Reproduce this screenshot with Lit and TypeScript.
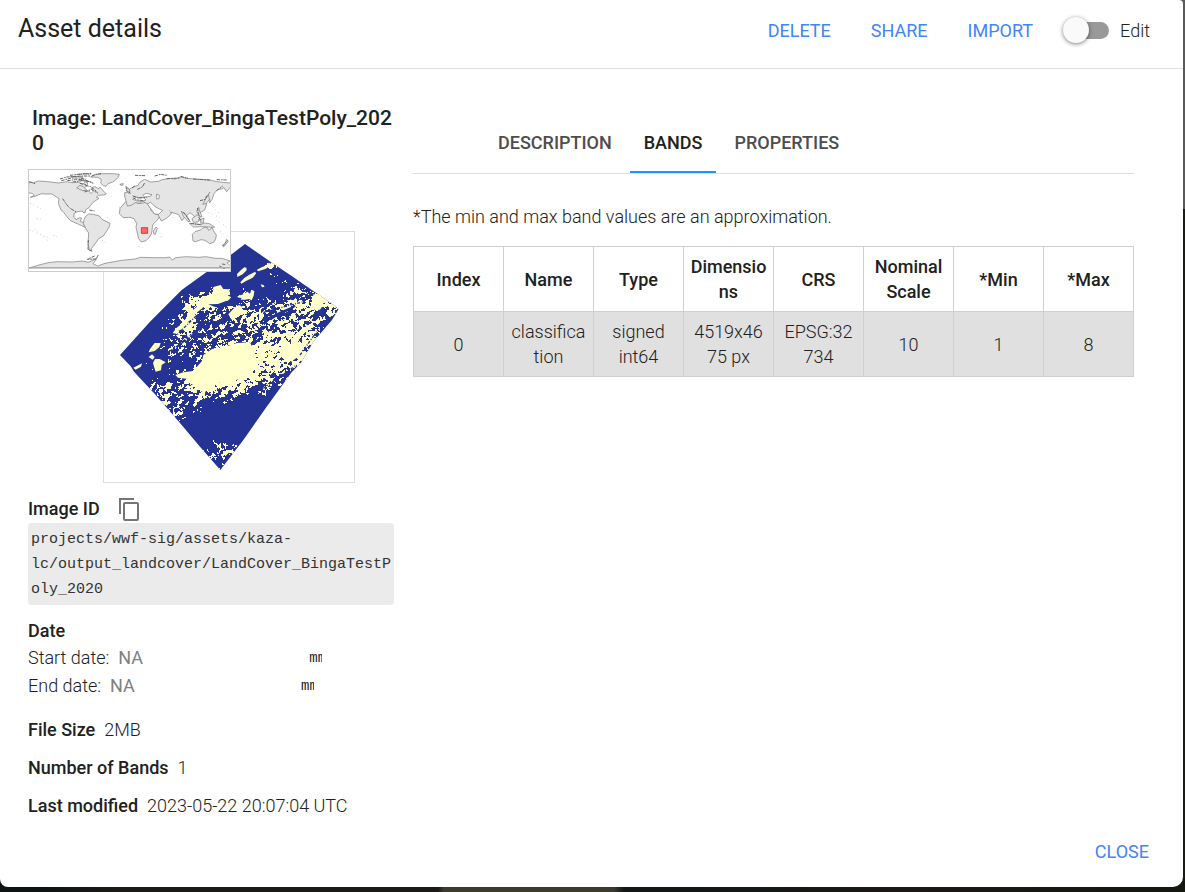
import { LitElement, html, css, svg } from "lit";
import { customElement, state } from "lit/decorators.js";

// Share of class 2 (cream) pixels, 0-9, at nodes spaced 12 pixels apart.
const DENSITY = [
  "0000000000000000000000",
  "0000000000000000000000",
  "0000000000000000000000",
  "0000000000000250000000",
  "0000000000000012200000",
  "0000000027503002436700",
  "0000000588335445568700",
  "0000001823366635632600",
  "0000014633334455566000",
  "0000015544545556665000",
  "0000034434788877870000",
  "0001231048999777750000",
  "0000013588998654000000",
  "0000455688664431000000",
  "0000554332221000000000",
  "0000034310000000000000",
  "0000004100000000000000",
  "0000000011000000000000",
  "0000000012331000000000",
  "0000000004430000000000",
  "0000000000000000000000",
  "0000000000000000000000",
];

const hash = (x: number, y: number, seed: number) => {
  let n = (x * 374761393 + y * 668265263 + seed * 1442695041) | 0;
  n = Math.imul(n ^ (n >>> 13), 1274126177);
  n = Math.imul(n ^ (n >>> 16), 2246822519);
  return ((n ^ (n >>> 15)) >>> 0) / 4294967296;
};

const smooth = (x: number, y: number, seed: number) => {
  const xi = Math.floor(x);
  const yi = Math.floor(y);
  const fx = x - xi;
  const fy = y - yi;
  const top = hash(xi, yi, seed) * (1 - fx) + hash(xi + 1, yi, seed) * fx;
  const low = hash(xi, yi + 1, seed) * (1 - fx) + hash(xi + 1, yi + 1, seed) * fx;
  return top * (1 - fy) + low * fy;
};

const density = (x: number, y: number) => {
  const gx = x / 12;
  const gy = y / 12;
  const i = Math.floor(gx);
  const j = Math.floor(gy);
  const at = (a: number, b: number) => Number(DENSITY[b]?.[a] ?? 0);
  const fx = gx - i;
  const fy = gy - j;
  return (
    ((at(i, j) * (1 - fx) + at(i + 1, j) * fx) * (1 - fy) +
      (at(i, j + 1) * (1 - fx) + at(i + 1, j + 1) * fx) * fy) / 9
  );
};

const buildSpeckle = () => {
  let d = "";
  for (let y = 0; y < 252; y++) {
    let start = -1;
    for (let x = 0; x <= 252; x++) {
      const u = x * 0.85 - y * 0.52;
      const v = x * 0.52 + y * 0.85;
      const noise =
        smooth(u / 5, v / 2.2, 3) * 0.42 + smooth(x / 1.8, y / 1.8, 9) * 0.42 + hash(x, y, 5) * 0.16;
      const level = 0.54 + (noise - 0.5) * 1.6;
      const on = x < 252 && density(x, y) > Math.max(level, 0.1);
      if (on && start < 0) start = x;
      if (!on && start >= 0) {
        d += `M${9 + start * 3} ${18 + y * 3}h${(x - start) * 3}v3h${(start - x) * 3}z`;
        start = -1;
      }
    }
  }
  return d;
};

const SPECKLE = buildSpeckle();

const sceneSvg = svg`
  <defs>
    <clipPath id="scene">
      <path d="M435 57L520 116L574 152L640 198L690 232L716 252L696 285L640 350L604 412L575 442L500 545L430 645L361 735L300 665L238 592L165 508L102 440L92 424L60 390L150 290L245 195L300 155L392 90Z"/>
    </clipPath>
  </defs>
  <g clip-path="url(#scene)">
    <path fill="#253494" d="M0 0h800v800H0z"/>
    <path fill="#ffffcc" d="M340 186l22-6l8 12l18 1l1 10l-14 5l18 8l-3 8l-20 7l-16 6l-24 0l-20 10l-22 18l-10 16l-12 8l-14 20l-16 8l-10 9l-8-2l12-16l20-15l12-16l8-14l20-18l12-20l18-8l20-12zM310 390l26-18l38-6l36-12l40-2l12 26l4 40l-20 22l-28 22l-26 8l-30 4l-20-4l-2 10l-20 12l-6 14l-14-10l-26-20l-10-14l-30-4l-8-8l24-8l30-4l12-14l14-16zM560 370l20-18l24 4l-2 22l-12 20l-16 12l-12-10zM640 208l18 0l12 14l0 18l-10 14l-16 2l-6-18zM385 268l18-20l14-8l8 4l-6 18l-10 14l-14 8z"/>
    <path fill="#ffffcc" shape-rendering="crispEdges" d="${SPECKLE}"/>
    <path fill="#ffffcc" d="M411 147l12-12l10-8l6 1l1 8l-12 12l-16 8zM421 172l12-13l15-10l18-9l2 6l-10 12l-20 10l-14 8zM471 134l14-7l12-5l10-9l9 5l8 6l-16 0l-10 7l-24 8zM482 178l8 2l4 5l-8 2zM412 214l18-6l12-8l8 6l4-12l9 4l-2 14l-6 14l-8-4l-12 2l-18 0zM150 372l14-18l18 0l-4 12l-14 12l-18 4zM146 396l10-8l8 8l-6 8zM165 402l14 0l18 10l-12 8l-2 16l-16 4l-4-12l-4-14zM100 428l16-8l10-5l-3 10l-16 9z"/>
    <path fill="#253494" d="M325 238l34-1l24-10l14-12l28 4l-6 12l-26 10l-30 8l-20-4zM485 282l30-10l24-12l34-14l16-3l-16 12l-34 14l-22 14l-26 4z"/>
    <path fill="none" stroke="#253494" stroke-width="4" stroke-dasharray="9 5 3 4" d="M222 338L310 252M240 352L340 286M210 378L300 318M468 250L600 214M490 262L610 230M520 468L590 420M490 490L552 446M620 300L680 250M600 390L650 320"/>
  </g>
`;

const worldSvg = svg`
  <g fill="#e5e5e5" stroke="#777" stroke-width="2" stroke-linejoin="round">
    <path d="M27 66l14 3l12-6l30 2l32 4l24-4l18 3l18-1l14 6l6-8l8 3l-2 10l-14 8l2 6l18 1l6 8l6-6l-4-12l10-3l10 6l6-4l10 12l8 8l-8 3l-16 1l-6 5l8 4l-18 12l-8 10l-4 6l-10 6l-2 10l-6-2l-2-4l-14 2l-10 4l-2 12l8 8l10-6l6 1l-4 10l10 4l2 8l8 4l-6 2l-12-6l-18-8l-14-6l-12-14l-10-14l-6-4l-8-20l2-14l-12-8l-10-6l-20 0l-10-1l-20 8l-14 3l12-6l-6-6l-14-1z"/>
    <path d="M212 51l14-7l22-3l30 0l20 2l-4 9l-8 9l-8 5l-14 5l-6 8l-8-2l-8-8l2-10l-10-7z"/>
    <path d="M196 170l10-8l14 1l18 5l8 10l24 12l-2 10l-10 16l-8 12l-14 8l-8 12l-8 10l-6 8l2 8l-8-3l-4-20l2-32l-8-12l-8-16l2-12z"/>
    <path d="M318 124l18-2l10 5l14 4l18-4l8 4l8 22l12 10l16-1l-8 16l-16 16l-2 18l-2 10l-8 12l-8 8l-14 4l-8-10l-8-34l2-12l-8-14l-12-4l-20 1l-12-12l2-16z"/>
    <path d="M314 108l0-10l16-3l-2-8l12-6l14-5l6-10l14-8l18 8l24-2l10-5l24-4l16 2l14-6l20 4l36 3l34 2l20 5l40 4l20 0l-12 8l-10 8l-8 10l-8-12l-8 4l-12 2l-10 12l-6 18l-8 10l2-10l-14 1l4 12l-6 18l-14 8l-4 8l4 14l-10 4l-4-10l-6-8l-10-8l-18 16l-6 8l-10-18l-12-4l-12-4l2 6l-16 14l-14 7l-16-30l-4-6l-4-8l-14-1l-2-6l-16-8l-10 6l-12-2l-12 8l-12 2z"/>
    <path d="M517 223l8-8l16-5l10-7l12 0l2 8l8-4l2-8l6 14l8 12l-2 12l-6 10l-12 4l-14-10l-12-2l-16 6l-8-2z"/>
    <path d="M400 213l8-12l4 4l-6 18l-5-2zM484 154l14 10l12 20l-6 1l-14-16zM508 190l34 4l12-5l14 2l16 10l-8 1l-22-2l-34 1zM516 176l16-12l8 8l-6 14l-14 1zM542 178l10-4l-2 14l-8 2zM530 154l6-12l4 14l6 14l-6 0zM566 105l2 14l-10 12l-10 2l6-10l4-14zM620 238l5 6l-14 17l-4-3l8-8zM319 92l4-10l6 10l-2 9zM301 72l9-1l-2 5l-8-1zM170 84l18 8l12-2l-10-10l-10-4z"/>
    <path fill="#fff" d="M338 118l10-7l8 4l14-2l8 7l-12 4l-14-1zM368 106l10-6l18 4l-6 5l-16 2zM410 102l8 4l-1 10l-7 1zM382 132l22 30l12 1l12-12l-10-4l-14-8l-12-12z"/>
    <path d="M27 324l30-9l28-7l26-3l46 1l30-3l18 4l22-10l8-12l-8 16l-8 10l14 7l22-8l50-9l40-4l16-5l40 1l36 0l12-2l8 9l10-7l30-3l40 2l20-2l30 5l18 0l26 8l-10 5l8 8l10 4v4H27z"/>
  </g>
  <g fill="none" stroke="#666" stroke-width="3" stroke-dasharray="10 3 5 2">
    <path d="M120 57l20-6l30-2l22 3M124 62l30-8l24 0l20 4M142 62l24-3l28 2M150 46l42-5l20 2M152 51l30-3l30 0M176 43l40-3M158 66l30-4l26 4M176 58l26 4l18 8M180 70l18 4M215 48l12-5l16-2M345 46l30 1M404 48l18-5l18 3M482 49l22 6M440 56l40-2M520 57l50 3M590 59l32 1M28 65l18 6M196 76l16 4l20 16M128 116l12 18l10 11l18 10M205 240l-1 28l12 5M224 288l-22 10l26-1M598 318l16 8M606 312l12 2"/>
    <path d="M194 96l20-8l20 12M318 78l2 14l12 8M338 108l20 5l22-1M340 114l12 6l20 2M336 84l8-6M352 88l16-8l6-12M490 156l20 28M512 190l32 4M532 144l5 22M536 172l10 12M540 122l16-4l14-22M590 92l18-14M208 150l16 3M608 258l14-16"/>
  </g>
  <g fill="none" stroke="#aaa" stroke-width="2" stroke-dasharray="3 7 2 12">
    <path d="M30 130l40 20M28 210l60 24M50 176l22 4M165 168l14 10M262 172l10 10M298 140l6 20M420 220l10 10M448 150l12 24M566 158l36 16M590 180l34 24M600 214l20 14M246 240l10 8M356 260l16 4M100 226l20 8M422 230l4 6M578 140l20 20M44 208l40 34"/>
  </g>
  <path fill="none" stroke="#aaa" stroke-width="3" d="M25 323H631"/>
  <path fill="#f66" stroke="#e60000" stroke-width="2" d="M364 203h19v17h-19z"/>
`;

const BANDS_HEAD = ["Index", "Name", "Type", "Dimensions", "CRS", "Nominal Scale", "*Min", "*Max"];
const BANDS = [["0", "classification", "signed int64", "4519x4675 px", "EPSG:32734", "10", "1", "8"]];

@customElement("app-root")
export class AppRoot extends LitElement {
  @state() private tab = "Bands";

  static styles = css`
    :host {
      display: grid;
      box-sizing: border-box;
      min-height: 100vh;
      padding: 0 2px 5px 0;
      background:
        linear-gradient(#5a5a5a, #5a5a5a) right top / 8px 209px no-repeat,
        linear-gradient(90deg, #0c1414 0 40px, #1c1a16 120px 438px, #3c3c2c 444px 614px, #121816 624px 700px, #1c1814 900px, #14180f) left bottom / 100% 14px no-repeat,
        #1a1c14;
      font: 400 18px/25px Roboto, sans-serif;
      color: #212121;
    }
    * { box-sizing: border-box; }
    .dialog {
      display: flex;
      flex-direction: column;
      min-width: 0;
      background: #fff;
      border-radius: 0 4px 10px 8px;
    }
    .header {
      display: flex;
      align-items: center;
      justify-content: space-between;
      height: 69px;
      padding: 0 33px 8px 18px;
      border-bottom: 1px solid #e0e0e0;
    }
    h1 { margin: 0; font-size: 25px; font-weight: 400; line-height: 32px; padding-bottom: 2px; }
    .actions { display: flex; align-items: center; gap: 40px; }
    .link {
      padding: 0;
      border: 0;
      background: none;
      font: inherit;
      color: #4285f4;
      text-transform: uppercase;
      cursor: pointer;
    }
    .switch { display: flex; align-items: center; gap: 11px; margin-left: -8px; }
    .toggle {
      appearance: none;
      display: flex;
      align-items: center;
      width: 44px;
      height: 17px;
      margin: 0;
      border-radius: 9px;
      background: #999;
    }
    .toggle::before {
      content: "";
      width: 26px;
      height: 26px;
      margin-left: -2px;
      border-radius: 50%;
      background: #fafafa;
      box-shadow: 0 1px 4px rgba(0, 0, 0, 0.5);
      flex: none;
    }
    .toggle:checked { justify-content: flex-end; background: #90b8f8; }
    .content {
      display: grid;
      grid-template-columns: 366px minmax(0, 1fr);
      gap: 19px;
      flex: 1;
      padding: 37px 49px 0 28px;
    }
    h2 {
      margin: 0 0 13px;
      padding: 0 0 0 4px;
      font-size: 21px;
      font-weight: 500;
      line-height: 25px;
      word-break: break-all;
    }
    .maps { display: grid; justify-items: start; align-items: start; }
    .maps svg { grid-area: 1 / 1; display: block; background: #fff; }
    .scene { width: 252px; height: 252px; margin: 62px 0 0 75px; border: 1px solid #ddd; }
    .world { width: 203px; height: 103px; border: 1px solid #ccc; }
    .label { font-weight: 500; }
    .id-row { display: flex; align-items: center; gap: 17px; margin-top: 12px; height: 28px; padding-bottom: 1px; }
    .copy { display: flex; padding: 0; border: 0; background: none; cursor: pointer; }
    .code {
      display: block;
      padding: 4px 2px 3px 3px;
      border-radius: 4px;
      background: #ebebeb;
      font: 15px/25px "Liberation Mono", monospace;
      color: #333;
      overflow-wrap: break-word;
    }
    .dates { margin-top: 13px; }
    .date { display: flex; align-items: center; gap: 9px; height: 28px; }
    .na { width: 182px; font-weight: 400; color: #808080; }
    .day { width: 13px; padding: 2px 0 0; border: 0; background: none; font: 14px/20px "Liberation Mono", monospace; color: #212121; }
    .facts { display: grid; gap: 13px; margin: 18px 0 0; }
    .fact { display: flex; gap: 9px; }
    .facts dt, .facts dd { margin: 0; }
    .light { font-weight: 300; }
    .tabs { display: flex; gap: 4px; height: 68px; padding-left: 71px; border-bottom: 1px solid #ddd; }
    .tab {
      padding: 8px 14px 0;
      border: 0;
      border-bottom: 2px solid transparent;
      background: none;
      font: inherit;
      font-weight: 500;
      color: #4d4d4d;
      text-transform: uppercase;
    }
    .tab.on { color: #212121; border-color: #2196f3; }
    .panel p { margin: 30px 0 17px; font-weight: 300; }
    table { width: 100%; table-layout: fixed; border-collapse: collapse; }
    th, td { height: 65px; padding: 7px 6px; border: 1px solid #d0d0d0; text-align: center; overflow-wrap: break-word; }
    th { font-weight: 500; }
    td { font-weight: 300; background: #e0e0e0; }
    .footer { display: flex; justify-content: flex-end; padding: 0 34px 23px; }
  `;

  render() {
    return html`
      <section class="dialog" role="dialog" aria-labelledby="title">
        <header class="header">
          <h1 id="title">Asset details</h1>
          <div class="actions">
            <button class="link">Delete</button>
            <button class="link">Share</button>
            <button class="link">Import</button>
            <div class="switch">
              <input class="toggle" id="edit" type="checkbox" />
              <label class="light" for="edit">Edit</label>
            </div>
          </div>
        </header>
        <div class="content">
          <aside>
            <h2>Image: LandCover_BingaTestPoly_2020</h2>
            <div class="maps">
              <svg class="scene" viewBox="12 21 750 750">${sceneSvg}</svg>
              <svg class="world" viewBox="27 30 603 303">${worldSvg}</svg>
            </div>
            <div class="id-row">
              <span class="label">Image ID</span>
              <button class="copy" aria-label="Copy image ID">
                <svg width="24" height="26" viewBox="0 0 24 26" fill="none" stroke="#757575" stroke-width="2">
                  <path d="M3 18V3H17" />
                  <rect x="7" y="7" width="14" height="17" rx="1" />
                </svg>
              </button>
            </div>
            <code class="code">projects/wwf-sig/assets/kaza-lc/output_landcover/LandCover_BingaTestPoly_2020</code>
            <div class="dates">
              <div class="label">Date</div>
              <div class="date light">
                <label for="start">Start date:</label><span class="na">NA</span>
                <input class="day" id="start" value="mm/dd/yyyy" />
              </div>
              <div class="date light">
                <label for="end">End date:</label><span class="na">NA</span>
                <input class="day" id="end" value="mm/dd/yyyy" />
              </div>
            </div>
            <dl class="facts">
              <div class="fact"><dt class="label">File Size</dt><dd class="light">2MB</dd></div>
              <div class="fact"><dt class="label">Number of Bands</dt><dd class="light">1</dd></div>
              <div class="fact"><dt class="label">Last modified</dt><dd class="light">2023-05-22 20:07:04 UTC</dd></div>
            </dl>
          </aside>
          <main class="panel">
            <div class="tabs" role="tablist">
              ${["Description", "Bands", "Properties"].map(
                (name) => html`<button
                  class="tab ${name === this.tab ? "on" : ""}"
                  role="tab"
                  aria-selected=${name === this.tab}
                  @click=${() => (this.tab = name)}
                >${name}</button>`,
              )}
            </div>
            <p>*The min and max band values are an approximation.</p>
            <table>
              <thead><tr>${BANDS_HEAD.map((h) => html`<th scope="col">${h}</th>`)}</tr></thead>
              <tbody>${BANDS.map((row) => html`<tr>${row.map((c) => html`<td>${c}</td>`)}</tr>`)}</tbody>
            </table>
          </main>
        </div>
        <footer class="footer"><button class="link">Close</button></footer>
      </section>
    `;
  }
}
